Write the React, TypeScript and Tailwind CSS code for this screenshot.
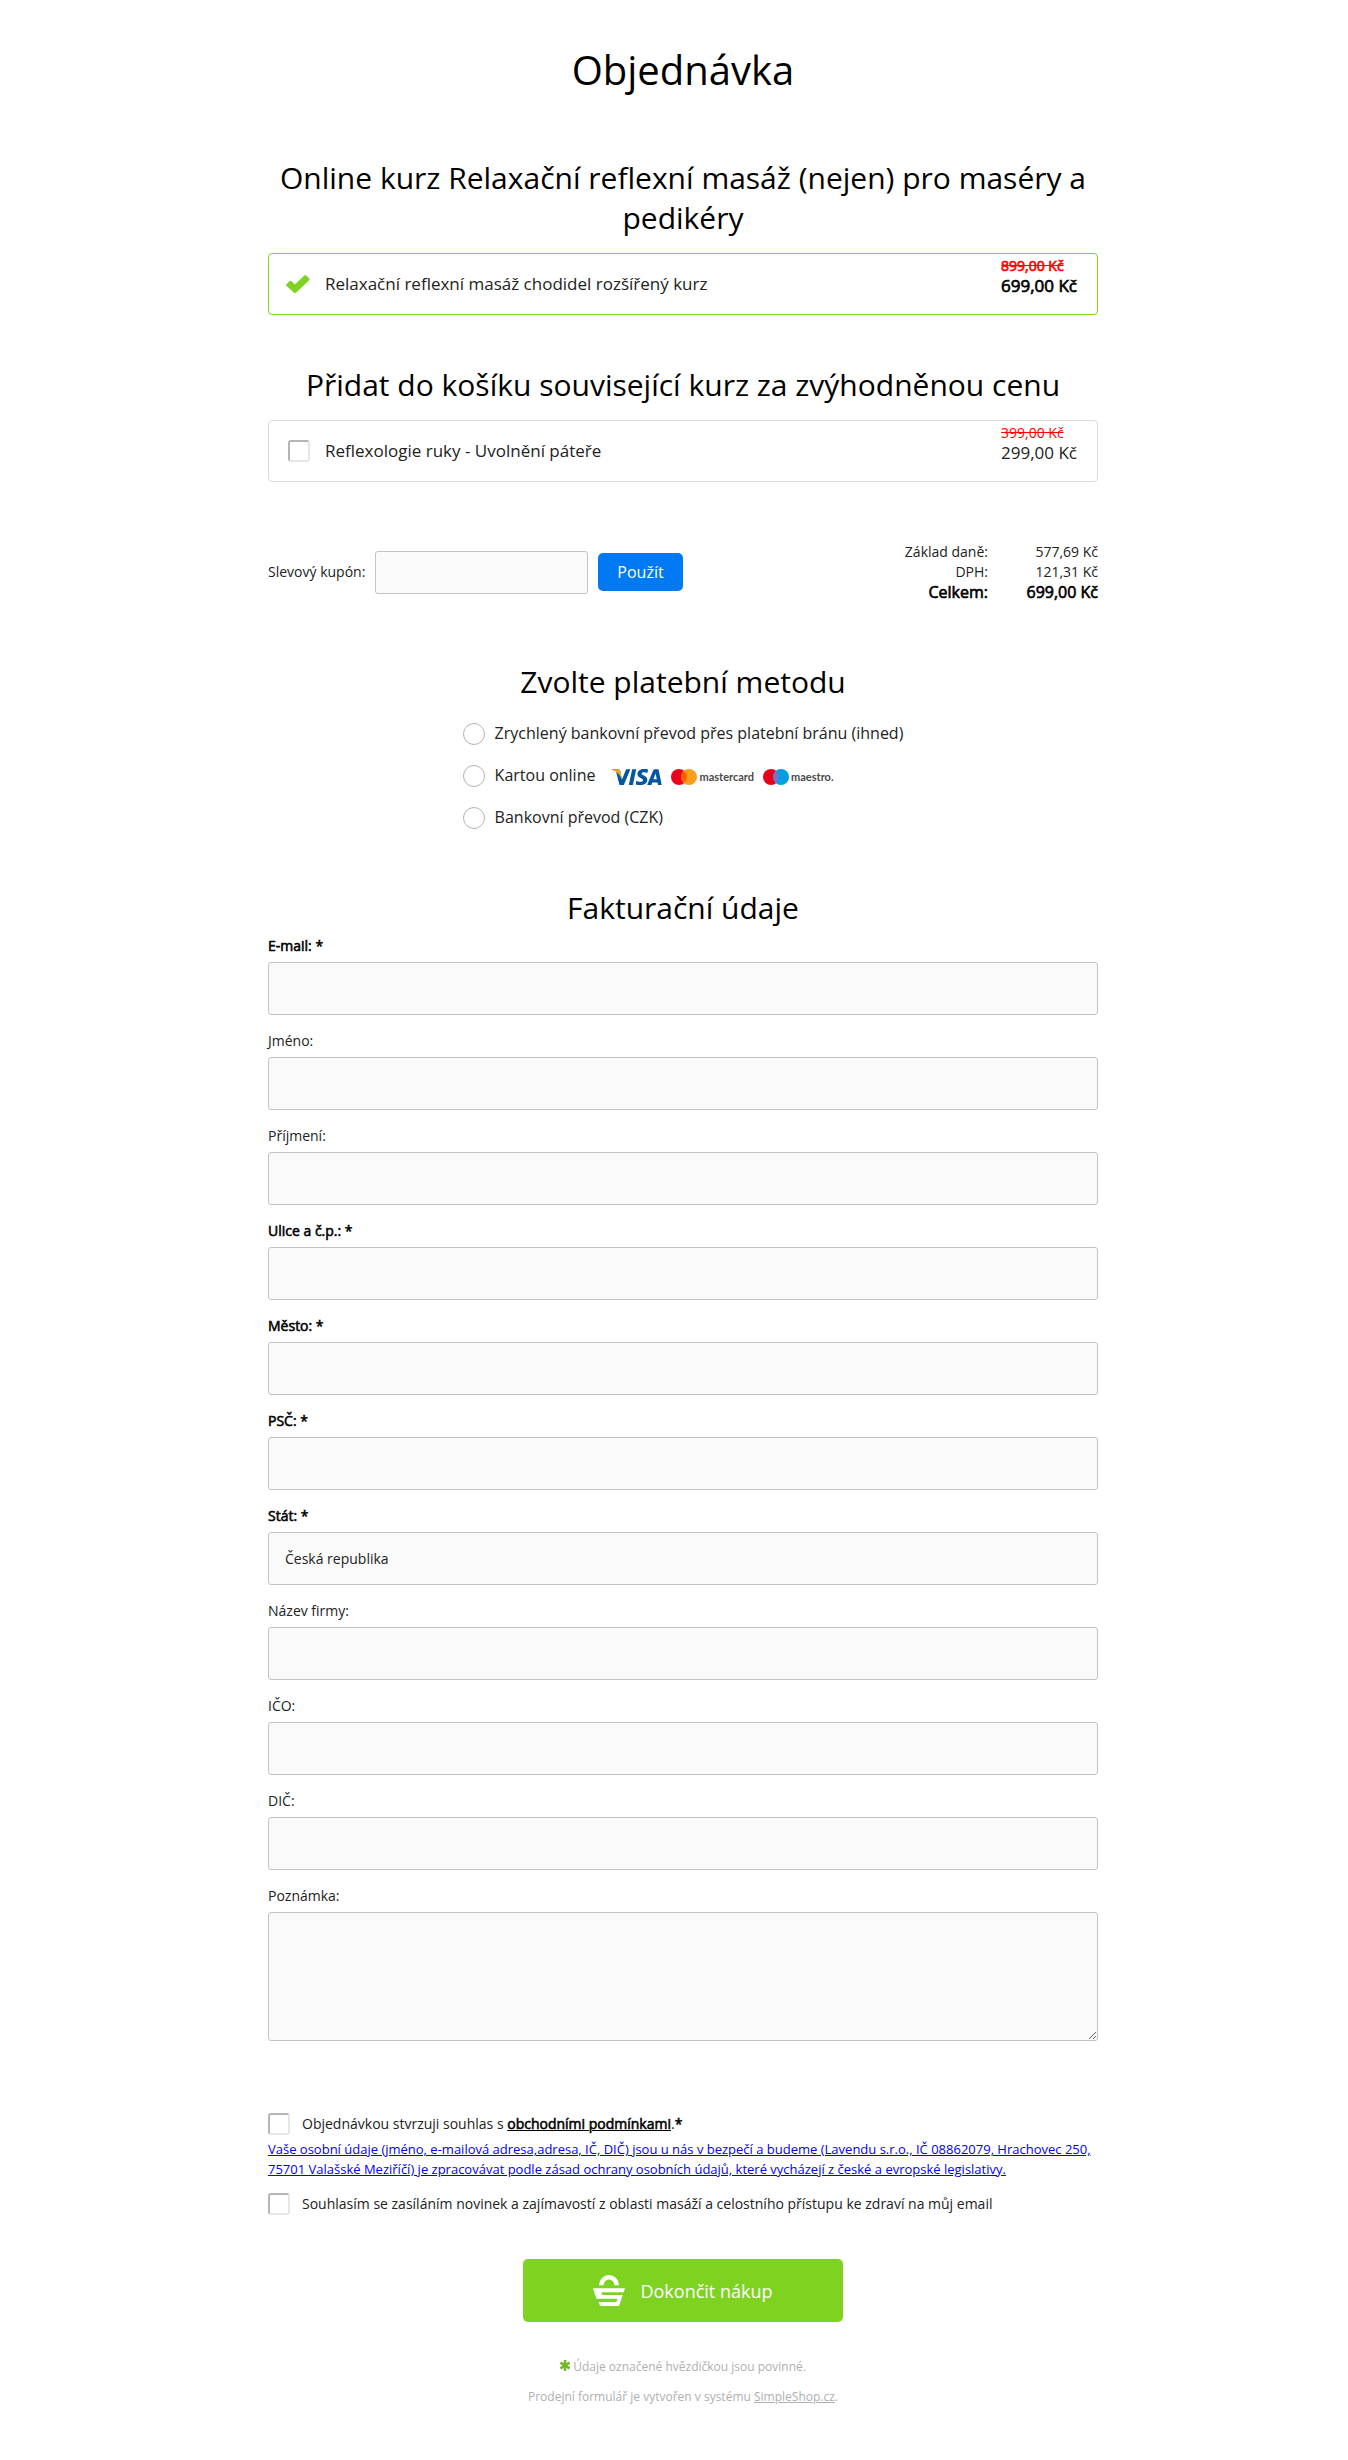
import { ReactNode } from 'react'
import { SiVisa } from 'react-icons/si'

// Emphasis keeps the regular glyph widths, so it thickens the strokes instead of switching weight
const strong = 'text-black [-webkit-text-stroke:0.04em]'
const field = 'block w-full rounded-[3px] border border-[#c2c2c2] bg-[#fafafa] px-4 text-sm'
const checkbox =
  'size-[22px] shrink-0 appearance-none rounded-[3px] border-2 border-t-[#b5b5b5] border-l-[#b5b5b5] border-r-[#e6e6e6] border-b-[#e6e6e6] bg-white checked:bg-[#7ed321]'

const fields = [
  { id: 'email', label: 'E-mail:', required: true },
  { id: 'firstName', label: 'Jméno:' },
  { id: 'lastName', label: 'Příjmení:' },
  { id: 'street', label: 'Ulice a č.p.:', required: true },
  { id: 'city', label: 'Město:', required: true },
  { id: 'zip', label: 'PSČ:', required: true },
  { id: 'country', label: 'Stát:', required: true },
  { id: 'company', label: 'Název firmy:' },
  { id: 'ico', label: 'IČO:' },
  { id: 'dic', label: 'DIČ:' },
]

const Heading = ({ children }: { children: ReactNode }) => (
  <h2 className="text-center text-[30px] leading-10 text-black">{children}</h2>
)

const CheckIcon = () => (
  <svg viewBox="0 0 24 18" className="h-[18px] w-6" fill="#7ed321" aria-hidden="true">
    <path d="M.5 9.200 3.600 6.100q.9-.9 1.800 0L9 9.600 18.300.5q.9-.8 1.800 0l3.100 3q.8.9 0 1.800L9.900 17.700q-.9.7-1.800 0L.5 11q-.8-.9 0-1.800z" />
  </svg>
)

const BasketIcon = () => (
  <svg viewBox="0 0 32 32" className="size-8" fill="#fff" aria-hidden="true">
    <path d="M6 10.300a10 10.300 0 0 1 20 0h-4.600a5.400 5.800 0 0 0-10.800 0z" />
    <path d="M0 13.300h32l-1.400 4H8.500l.6 2.700h20.700L26 31H7l-1.200-4h17.700l1-3.200h-21z" />
  </svg>
)

const StarIcon = () => (
  <svg viewBox="0 0 10 11" className="mb-1 inline-block h-[11px] w-[10px]" stroke="#76b82a" strokeWidth="2.600" aria-hidden="true">
    <path d="M5 0v11M.4 2.700l9.200 5.600M9.600 2.700.4 8.300" />
  </svg>
)

const VisaLogo = () => (
  <svg viewBox="0 8.200 24 7.600" className="h-4 w-[51px]" role="img" aria-label="Visa">
    <SiVisa size={24} color="#0157a2" />
    <path
      fill="#faa61a"
      d="M0 8.479l.046-.217h3.300a.904.904 0 0 1 .894.764l.8 4.200C4.400 11.300 2.800 9.400 0 8.479z"
    />
  </svg>
)

const CirclesLogo = ({ name, right, overlap }: { name: string; right: string; overlap: string }) => (
  <span className="flex items-center gap-[2px]">
    <svg viewBox="0 0 26 16" className="h-4 w-[26px]" aria-hidden="true">
      <circle cx="8" cy="8" r="8" fill="#eb001b" />
      <circle cx="18" cy="8" r="8" fill={right} />
      <path fill={overlap} d="M13 1.760a8 8 0 0 1 0 12.480a8 8 0 0 1 0-12.480z" />
    </svg>
    <span className="font-[Lato,sans-serif] text-[11px] leading-4 font-bold text-[#4a4a4a]">{name}</span>
  </span>
)

const Product = ({
  active,
  oldPrice,
  price,
  children,
}: {
  active?: boolean
  oldPrice: string
  price: string
  children: ReactNode
}) => (
  <div
    className={`mt-[15px] flex min-h-[62px] items-center justify-between rounded border pr-5 text-[17px] leading-5 ${
      active ? 'border-[#7ed321]' : 'border-[#dcdcdc]'
    }`}
  >
    {children}
    <div className={`self-start pt-[2px] ${active ? strong : ''}`}>
      <del className="block text-sm leading-5 text-[#ff0000]">{oldPrice}</del>
      {price}
    </div>
  </div>
)

const Payment = ({ id, label, children }: { id: string; label: string; children?: ReactNode }) => (
  <div className="flex items-start">
    <input
      type="radio"
      id={id}
      name="payment"
      className="size-[22px] shrink-0 appearance-none rounded-full border border-[#b4b4b4] bg-white checked:border-[6px] checked:border-[#7ed321]"
    />
    <label htmlFor={id} className="flex items-center pl-[10px] text-base leading-5">
      {label}
      {children}
    </label>
  </div>
)

const Field = ({ id, label, required }: { id: string; label: string; required?: boolean }) => (
  <div>
    <label htmlFor={id} className={`mb-[6px] block text-sm leading-5 ${required ? strong : ''}`}>
      {label} {required && '*'}
    </label>
    {id === 'country' ? (
      <select id={id} name={id} className={`${field} h-[53px] appearance-none`}>
        <option>Česká republika</option>
      </select>
    ) : (
      <input id={id} name={id} type={id === 'email' ? 'email' : 'text'} className={`${field} h-[53px]`} />
    )}
  </div>
)

export default function App() {
  return (
    <div className="bg-white pl-[18px] font-['Open_Sans',sans-serif] text-[#222]">
      <form className="mx-auto max-w-[830px] pt-[43px] pb-[50px]" onSubmit={(e) => e.preventDefault()}>
        <h1 className="mb-[62px] text-center text-[40px] leading-[53px] text-black">Objednávka</h1>

        <Heading>Online kurz Relaxační reflexní masáž (nejen) pro maséry a pedikéry</Heading>
        <Product active oldPrice="899,00 Kč" price="699,00 Kč">
          <div className="flex items-center gap-[15px] pl-[17px]">
            <CheckIcon />
            <span>Relaxační reflexní masáž chodidel rozšířený kurz</span>
          </div>
        </Product>

        <div className="mt-[50px]">
          <Heading>Přidat do košíku související kurz za zvýhodněnou cenu</Heading>
          <Product oldPrice="399,00 Kč" price="299,00 Kč">
            <label className="flex items-center gap-[15px] pl-[19px]">
              <input type="checkbox" name="related" className={checkbox} />
              <span>Reflexologie ruky - Uvolnění páteře</span>
            </label>
          </Product>
        </div>

        <div className="mt-[60px] flex items-center justify-between">
          <div className="flex items-center gap-[10px]">
            <label htmlFor="coupon" className="text-sm">
              Slevový kupón:
            </label>
            <input
              id="coupon"
              name="coupon"
              type="text"
              className="h-[43px] w-[213px] rounded-[3px] border border-[#c2c2c2] bg-[#fafafa] px-3 text-sm"
            />
            <button type="button" className="h-[38px] rounded-[5px] bg-[#0079f2] px-[19px] text-base text-white">
              Použít
            </button>
          </div>
          <table className="text-right text-sm leading-5">
            <tbody>
              <tr>
                <th className="text-right font-normal">Základ daně:</th>
                <td className="w-[110px]">577,69 Kč</td>
              </tr>
              <tr>
                <th className="text-right font-normal">DPH:</th>
                <td>121,31 Kč</td>
              </tr>
              <tr className={`text-base leading-5 ${strong}`}>
                <th className="text-right font-normal">Celkem:</th>
                <td>699,00 Kč</td>
              </tr>
            </tbody>
          </table>
        </div>

        <div className="mt-[60px]">
          <Heading>Zvolte platební metodu</Heading>
          <div className="mx-auto mt-[21px] flex w-fit flex-col gap-5">
            <Payment id="bank-fast" label="Zrychlený bankovní převod přes platební bránu (ihned)" />
            <Payment id="card" label="Kartou online">
              <span className="flex items-center gap-[9px] pt-1 pl-4">
                <VisaLogo />
                <CirclesLogo name="mastercard" right="#f79f1a" overlap="#ff5f00" />
                <CirclesLogo name="maestro." right="#009ee3" overlap="#7673c0" />
              </span>
            </Payment>
            <Payment id="bank" label="Bankovní převod (CZK)" />
          </div>
        </div>

        <div className="mt-[59px]">
          <Heading>Fakturační údaje</Heading>
          <div className="mt-2 flex flex-col gap-4">
            {fields.map((f) => (
              <Field key={f.id} {...f} />
            ))}
            <div>
              <label htmlFor="note" className="mb-[6px] block text-sm leading-5">
                Poznámka:
              </label>
              <textarea id="note" name="note" className={`${field} h-[129px] resize py-3`} />
            </div>
          </div>
        </div>

        <div className="mt-[72px] text-sm leading-[22px]">
          <div className="flex items-start gap-3">
            <input type="checkbox" id="terms" name="terms" className={checkbox} />
            <label htmlFor="terms">
              Objednávkou stvrzuji souhlas s{' '}
              <a href="#terms" className={`underline ${strong}`}>
                obchodními podmínkami
              </a>
              .<span className={strong}>*</span>
            </label>
          </div>
          <a href="#privacy" className="mt-1 mb-[14px] block text-[13px] leading-5 text-[#0000ee] underline">
            Vaše osobní údaje (jméno, e-mailová adresa,adresa, IČ, DIČ) jsou u nás v bezpečí a budeme (Lavendu s.r.o., IČ
            08862079, Hrachovec 250, 75701 Valašské Meziříčí) je zpracovávat podle zásad ochrany osobních údajů, které
            vycházejí z české a evropské legislativy.
          </a>
          <div className="flex items-start gap-3">
            <input type="checkbox" id="news" name="news" className={checkbox} />
            <label htmlFor="news">
              Souhlasím se zasíláním novinek a zajímavostí z oblasti masáží a celostního přístupu ke zdraví na můj email
            </label>
          </div>
        </div>

        <button
          type="submit"
          className="mx-auto mt-11 flex h-[63px] items-center rounded-[5px] bg-[#7ed321] px-[70px] text-lg text-white"
        >
          <BasketIcon />
          <span className="pl-[15px]">Dokončit nákup</span>
        </button>

        <div className="mt-[35px] flex flex-col gap-[10px] text-center text-xs leading-5 text-[#b0b0b0]">
          <p>
            <StarIcon /> Údaje označené hvězdičkou jsou povinné.
          </p>
          <p>
            Prodejní formulář je vytvořen v systému{' '}
            <a href="#simpleshop" className="underline">
              SimpleShop.cz
            </a>
            .
          </p>
        </div>
      </form>
    </div>
  )
}
